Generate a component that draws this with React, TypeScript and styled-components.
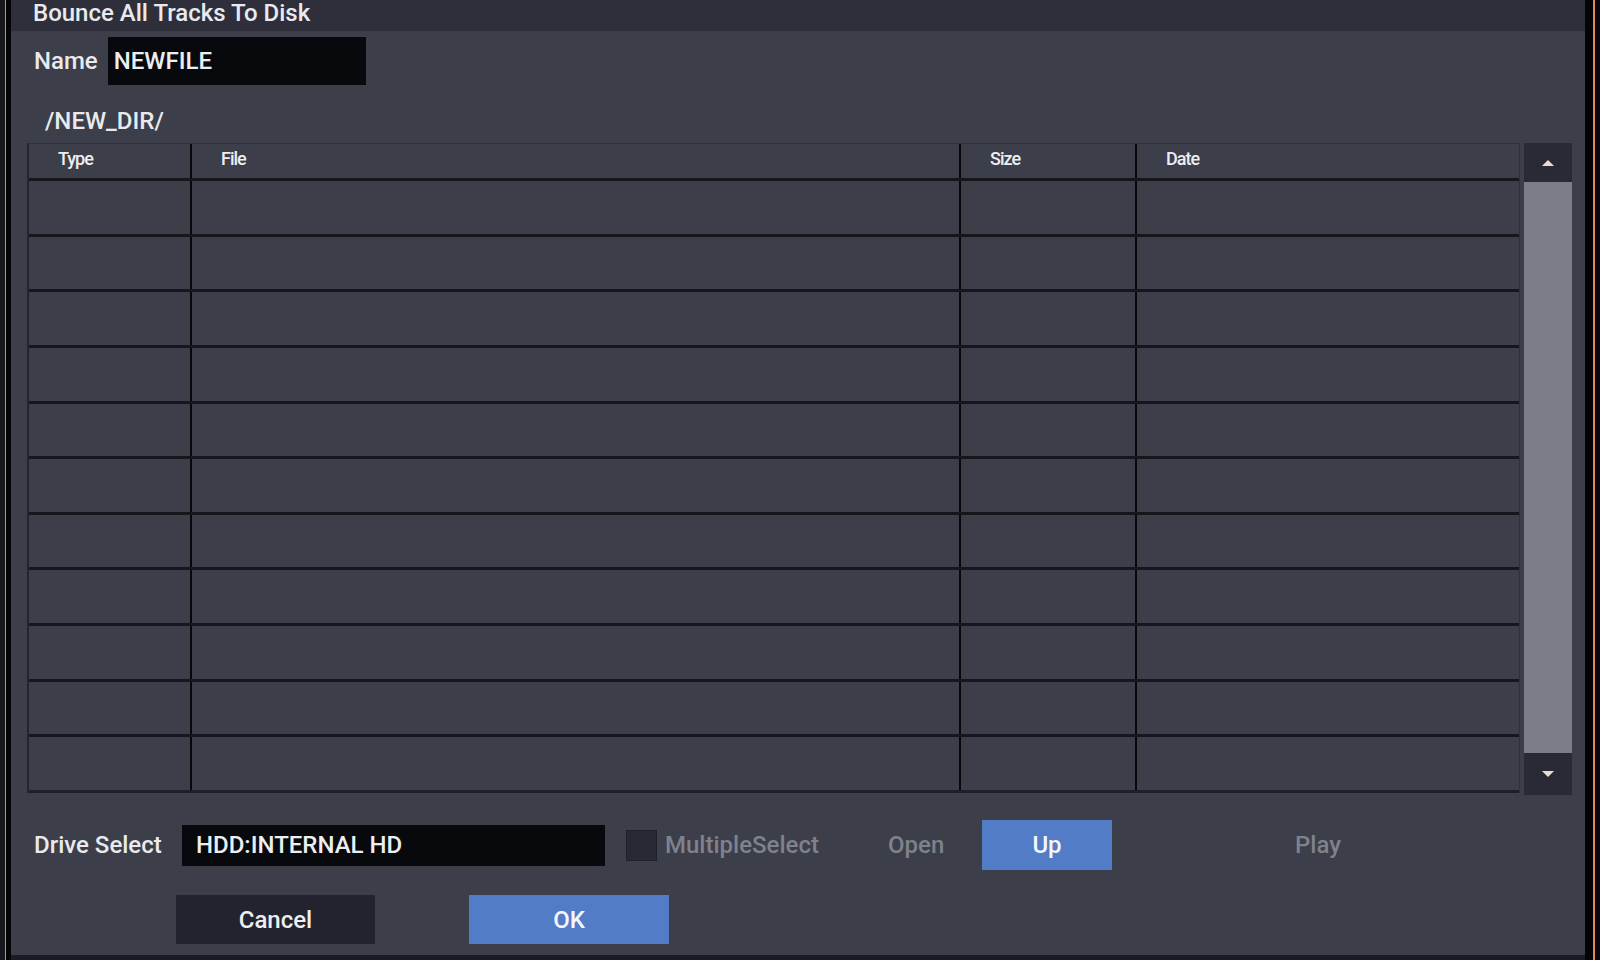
import styled, { createGlobalStyle } from "styled-components";

const GlobalStyle = createGlobalStyle`
    html, body {
        margin: 0;
        padding: 0;
        background: #0a0a0d;
    }
    * {
        box-sizing: border-box;
    }
`;

const Screen = styled.div`
    display: flex;
    width: 1600px;
    height: 960px;
    overflow: hidden;
    font-family: Roboto, "Liberation Sans", sans-serif;
    color: #e9eaee;
`;

const Bezel = styled.div<{ $side: "left" | "right" }>`
    flex: none;
    width: ${(p) => (p.$side === "left" ? "11px" : "15px")};
    height: 100%;
    background: ${(p) =>
        p.$side === "left"
            ? "linear-gradient(to right, #17181d 0 5px, #e2875e 5px 6px, #050507 6px 11px)"
            : "linear-gradient(to right, #050507 0 8px, #e2875e 8px 10px, #08080a 10px 15px)"};
`;

const Panel = styled.div`
    flex: none;
    width: 1574px;
    height: 960px;
    display: flex;
    flex-direction: column;
    background: #3c3e4a;
    border-bottom: 5px solid #1b1c23;
`;

const TitleBar = styled.div`
    height: 31px;
    padding-left: 22px;
    background: #2e2f3a;
    font-size: 24px;
    line-height: 26px;
    font-weight: 500;
`;

const Body = styled.div`
    display: flex;
    flex-direction: column;
    padding: 0 13px 0 16px;
`;

const NameRow = styled.div`
    display: flex;
    align-items: center;
    gap: 10px;
    margin-top: 6px;
    padding-left: 7px;
`;

const Label = styled.div<{ $width?: number }>`
    flex: none;
    width: ${(p) => (p.$width ? `${p.$width}px` : "auto")};
    font-size: 24px;
    font-weight: 500;
    color: #e9eaee;
`;

const Field = styled.div<{ $width: number; $height: number; $pad: number }>`
    flex: none;
    display: flex;
    align-items: center;
    width: ${(p) => p.$width}px;
    height: ${(p) => p.$height}px;
    padding-left: ${(p) => p.$pad}px;
    background: #08090c;
    font-size: 24px;
    font-weight: 500;
    color: #eceef2;
`;

const PathLine = styled.div`
    margin-top: 21px;
    padding-left: 18px;
    font-size: 24px;
    line-height: 30px;
    font-weight: 500;
`;

const TableArea = styled.div`
    display: flex;
    gap: 4px;
    height: 652px;
    margin-top: 7px;
`;

const Table = styled.div`
    flex: none;
    width: 1493px;
    height: 650px;
    display: grid;
    grid-template-rows: 37px repeat(11, 1fr);
    border-left: 2px solid #24252d;
    border-top: 1px solid #30313b;
    border-right: 1px solid #30313b;
`;

const Row = styled.div<{ $last?: boolean }>`
    display: grid;
    grid-template-columns: 161px 769px 176px 1fr;
    border-bottom: 3px solid ${(p) => (p.$last ? "#1e1f27" : "#16171c")};
`;

const Cell = styled.div<{ $divider?: boolean }>`
    border-left: ${(p) => (p.$divider ? "2px solid #07080a" : "none")};
`;

const HeadCell = styled.div<{ $divider?: boolean }>`
    display: flex;
    align-items: center;
    padding: 0 0 5px 29px;
    border-left: ${(p) => (p.$divider ? "2px solid #07080a" : "none")};
    font-size: 18px;
    font-weight: 500;
    letter-spacing: -1px;
    color: #eceef2;
`;

const ScrollBar = styled.div`
    flex: none;
    width: 48px;
    display: flex;
    flex-direction: column;
`;

const ScrollButton = styled.div<{ $height: number }>`
    flex: none;
    height: ${(p) => p.$height}px;
    display: flex;
    align-items: center;
    justify-content: center;
    background: #292a36;
`;

const ScrollTrack = styled.div`
    flex: 1;
    background: #7b7e88;
`;

const ControlRow = styled.div<{ $height: number }>`
    display: flex;
    align-items: center;
    height: ${(p) => p.$height}px;
    margin-top: 25px;
    padding-left: 7px;
`;

const CheckBox = styled.div`
    flex: none;
    width: 31px;
    height: 31px;
    margin-left: 21px;
    background: #282935;
    border: 1px solid #1f2029;
`;

const DimText = styled.div<{ $width?: number; $offset?: number }>`
    flex: none;
    width: ${(p) => (p.$width ? `${p.$width}px` : "auto")};
    margin-left: ${(p) => p.$offset ?? 0}px;
    font-size: 24px;
    font-weight: 500;
    color: #7f828b;
`;

const Button = styled.div<{ $primary?: boolean; $width: number; $height: number; $offset?: number }>`
    flex: none;
    display: flex;
    align-items: center;
    justify-content: center;
    width: ${(p) => p.$width}px;
    height: ${(p) => p.$height}px;
    margin-left: ${(p) => p.$offset ?? 0}px;
    background: ${(p) => (p.$primary ? "#527cc6" : "#22232e")};
    font-size: 24px;
    font-weight: 500;
    color: ${(p) => (p.$primary ? "#f4f6fb" : "#eceef2")};
`;

const Arrow = ({ down }: { down?: boolean }) => (
    <svg width="14" height="8" viewBox="0 0 14 8">
        <polygon points={down ? "1,1 13,1 7,7" : "1,7 13,7 7,1"} fill="#eadbd4" />
    </svg>
);

const columns = ["Type", "File", "Size", "Date"];

export default function App() {
    const rows = Array.from({ length: 11 }, (_, i) => i);

    return (
        <Screen>
            <GlobalStyle />
            <Bezel $side="left" />
            <Panel>
                <TitleBar>Bounce All Tracks To Disk</TitleBar>
                <Body>
                    <NameRow>
                        <Label>Name</Label>
                        <Field $width={258} $height={48} $pad={6}>
                            NEWFILE
                        </Field>
                    </NameRow>
                    <PathLine>/NEW_DIR/</PathLine>
                    <TableArea>
                        <Table>
                            <Row>
                                {columns.map((c, i) => (
                                    <HeadCell key={c} $divider={i > 0}>
                                        {c}
                                    </HeadCell>
                                ))}
                            </Row>
                            {rows.map((r) => (
                                <Row key={r} $last={r === rows.length - 1}>
                                    {columns.map((c, i) => (
                                        <Cell key={c} $divider={i > 0} />
                                    ))}
                                </Row>
                            ))}
                        </Table>
                        <ScrollBar>
                            <ScrollButton $height={39}>
                                <Arrow />
                            </ScrollButton>
                            <ScrollTrack />
                            <ScrollButton $height={42}>
                                <Arrow down />
                            </ScrollButton>
                        </ScrollBar>
                    </TableArea>
                    <ControlRow $height={50}>
                        <Label $width={148}>Drive Select</Label>
                        <Field $width={423} $height={41} $pad={14}>
                            HDD:INTERNAL HD
                        </Field>
                        <CheckBox />
                        <DimText $width={223} $offset={8}>
                            MultipleSelect
                        </DimText>
                        <DimText $width={94}>Open</DimText>
                        <Button $primary $width={130} $height={50}>
                            Up
                        </Button>
                        <DimText $offset={183}>Play</DimText>
                    </ControlRow>
                    <ControlRow $height={49}>
                        <Button $width={199} $height={49} $offset={142}>
                            Cancel
                        </Button>
                        <Button $primary $width={200} $height={49} $offset={94}>
                            OK
                        </Button>
                    </ControlRow>
                </Body>
            </Panel>
            <Bezel $side="right" />
        </Screen>
    );
}
